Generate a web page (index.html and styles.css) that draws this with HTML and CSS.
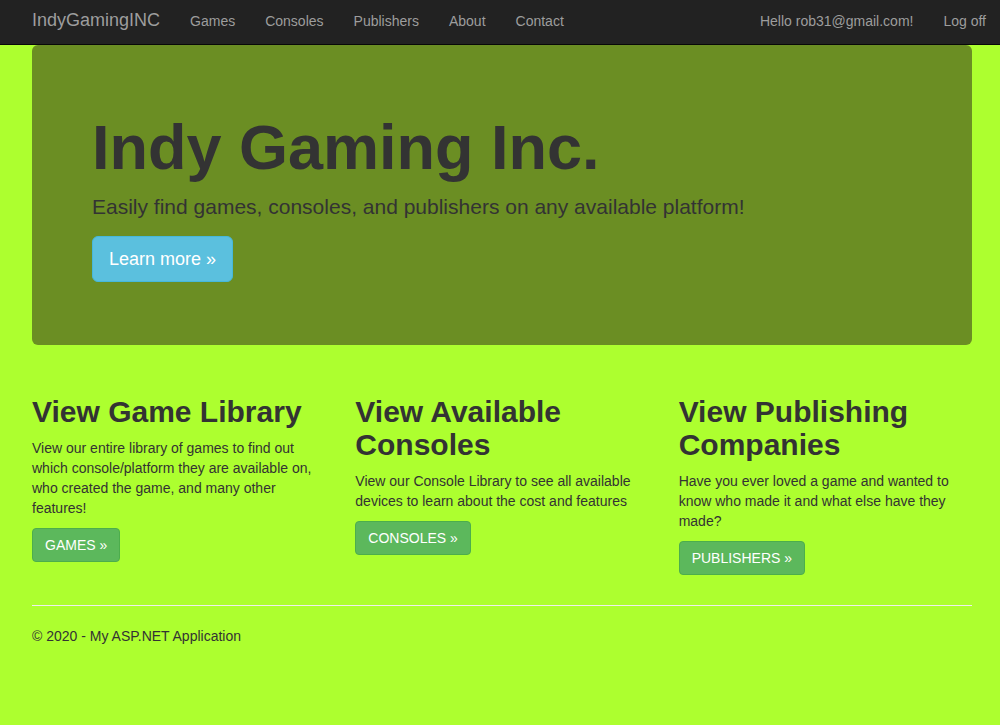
FILE: index.html
```html
<!DOCTYPE html>
<html lang="en">
<head>
<meta charset="utf-8">
<title>Home Page - IndyGamingINC</title>
<link rel="stylesheet" href="styles.css">
</head>
<body>
<header class="navbar">
  <div class="navbar-inner">
    <a class="brand" href="#">IndyGamingINC</a>
    <ul class="nav">
      <li><a href="#">Games</a></li>
      <li><a href="#">Consoles</a></li>
      <li><a href="#">Publishers</a></li>
      <li><a href="#">About</a></li>
      <li><a href="#">Contact</a></li>
    </ul>
    <ul class="nav nav-right">
      <li><a href="#">Hello rob31@gmail.com!</a></li>
      <li><a href="#" class="last">Log off</a></li>
    </ul>
  </div>
</header>
<main class="container">
  <section class="jumbotron">
    <h1>Indy Gaming Inc.</h1>
    <p class="lead">Easily find games, consoles, and publishers on any available platform!</p>
    <p class="jumbo-action"><a href="#" class="btn btn-lg btn-info">Learn more &raquo;</a></p>
  </section>
  <div class="row">
    <div class="col">
      <h2>View Game Library</h2>
      <p>View our entire library of games to find out which console/platform they are available on, who created the game, and many other features!</p>
      <p><a class="btn btn-success" href="#">GAMES &raquo;</a></p>
    </div>
    <div class="col">
      <h2>View Available Consoles</h2>
      <p>View our Console Library to see all available devices to learn about the cost and features</p>
      <p><a class="btn btn-success" href="#">CONSOLES &raquo;</a></p>
    </div>
    <div class="col">
      <h2>View Publishing Companies</h2>
      <p>Have you ever loved a game and wanted to know who made it and what else have they made?</p>
      <p><a class="btn btn-success" href="#">PUBLISHERS &raquo;</a></p>
    </div>
  </div>
  <hr class="divider">
  <footer class="footer">
    <p>&copy; 2020 - My ASP.NET Application</p>
  </footer>
</main>
</body>
</html>
```
FILE: styles.css
```css
* { box-sizing: border-box; }

html, body {
  margin: 0;
  padding: 0;
}

body {
  background: #adff2f;
  font-family: "Liberation Sans", Arial, Helvetica, sans-serif;
  font-size: 14px;
  line-height: 20px;
  color: #333;
}

a { text-decoration: none; }

.navbar {
  background: #222;
  border-bottom: 1px solid #080808;
  height: 45px;
}

.navbar-inner {
  display: flex;
  align-items: flex-start;
  padding: 0 14px 0 32px;
}

.brand {
  color: #9d9d9d;
  font-size: 18px;
  line-height: 20px;
  padding: 10px 15px 14px 0;
}

.nav {
  display: flex;
  list-style: none;
  margin: 0;
  padding: 0;
}

.nav a {
  display: block;
  color: #9d9d9d;
  font-size: 14px;
  line-height: 20px;
  padding: 11px 15px 13px;
}

.nav-right { margin-left: auto; }
.nav-right a.last { padding-right: 0; }

.container {
  width: 940px;
  margin-left: 32px;
}

.jumbotron {
  background: #6b8e23;
  border-radius: 6px;
  padding: 48px 60px 63px;
  margin-bottom: 30px;
}

.jumbotron h1 {
  font-size: 63px;
  line-height: 1.1;
  font-weight: bold;
  margin: 20px 0 10px;
  color: #333;
}

.jumbotron .lead {
  font-size: 21px;
  line-height: 30px;
  margin: 0 0 14px;
}

.jumbo-action {
  display: flex;
  margin: 0;
}

.btn {
  display: inline-block;
  color: #fff;
  border: 1px solid transparent;
  border-radius: 4px;
  padding: 6px 12px;
  font-size: 14px;
  line-height: 20px;
}

.btn-lg {
  font-size: 18px;
  line-height: 24px;
  padding: 10px 16px;
  border-radius: 6px;
}

.btn-info {
  background: #5bc0de;
  border-color: #46b8da;
}

.btn-success {
  background: #5cb85c;
  border-color: #4cae4c;
}

.row {
  display: grid;
  grid-template-columns: repeat(3, 1fr);
  column-gap: 30px;
}

.col h2 {
  font-size: 30px;
  line-height: 1.1;
  font-weight: bold;
  margin: 20px 0 10px;
  color: #333;
}

.col p {
  margin: 0 0 10px;
}

.divider {
  border: 0;
  border-top: 1px solid #eee;
  margin: 20px 0;
}

.footer p {
  margin: 0 0 10px;
}
```
